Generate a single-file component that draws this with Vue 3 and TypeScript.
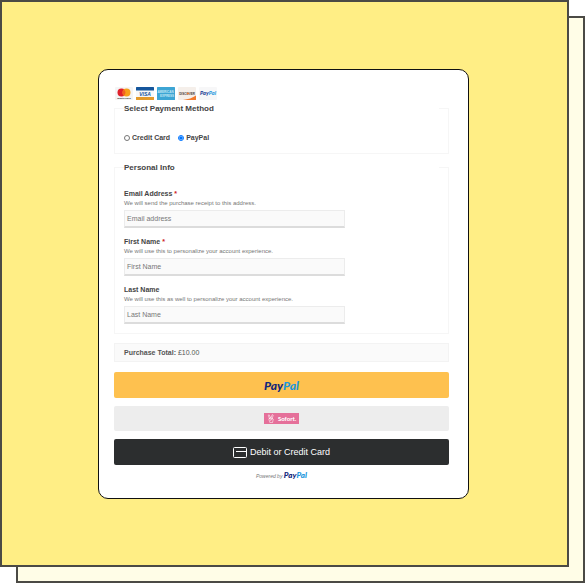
<script setup lang="ts">
import { ref } from 'vue'

interface Field {
  id: string
  label: string
  hint: string
  placeholder: string
  type: string
  required: boolean
}

const method = ref<'card' | 'paypal'>('paypal')

const fields: Field[] = [
  {
    id: 'email',
    label: 'Email Address',
    hint: 'We will send the purchase receipt to this address.',
    placeholder: 'Email address',
    type: 'email',
    required: true,
  },
  {
    id: 'first-name',
    label: 'First Name',
    hint: 'We will use this to personalize your account experience.',
    placeholder: 'First Name',
    type: 'text',
    required: true,
  },
  {
    id: 'last-name',
    label: 'Last Name',
    hint: 'We will use this as well to personalize your account experience.',
    placeholder: 'Last Name',
    type: 'text',
    required: false,
  },
]

const values = ref<Record<string, string>>({ email: '', 'first-name': '', 'last-name': '' })
</script>

<template>
  <div class="stage">
    <div class="backdrop"></div>
    <main class="panel">
      <form class="checkout" @submit.prevent>
        <div class="brands">
          <svg class="brand" viewBox="0 0 36 26">
            <rect width="36" height="26" rx="2" fill="#f4f4f5" />
            <circle cx="13" cy="11" r="8" fill="#e0202b" />
            <circle cx="23" cy="11" r="8" fill="#f79f1a" />
            <path d="M18 4.8a8 8 0 0 1 0 12.4a8 8 0 0 1 0-12.4z" fill="#f26122" />
            <text x="18" y="24" font-size="5" font-weight="700" text-anchor="middle" fill="#333">mastercard</text>
          </svg>
          <svg class="brand" viewBox="0 0 36 26">
            <rect width="36" height="26" rx="1" fill="#f7f8f9" />
            <path d="M0 1q0-1 1-1h34q1 0 1 1v6H0z" fill="#15569c" />
            <path d="M0 20h36v5q0 1-1 1H1q-1 0-1-1z" fill="#e39a2b" />
            <text x="18" y="17" font-size="10" font-weight="700" font-style="italic" text-anchor="middle" fill="#15569c">VISA</text>
          </svg>
          <svg class="brand" viewBox="0 0 36 26">
            <rect width="36" height="26" rx="1" fill="#3da5d4" />
            <text x="17" y="12" font-size="6" font-weight="700" text-anchor="middle" fill="#c4e7f5">AMERICAN</text>
            <text x="20" y="19" font-size="6" font-weight="700" text-anchor="middle" fill="#c4e7f5">EXPRESS</text>
          </svg>
          <svg class="brand" viewBox="0 0 36 26">
            <rect width="36" height="26" rx="2" fill="#f5efea" />
            <path d="M36 17v8q0 1-1 1H10Q26 24 36 17z" fill="#f27a2c" />
            <text x="18" y="15" font-size="6" font-weight="700" text-anchor="middle" fill="#4a3a35">DISCOVER</text>
            <circle cx="20" cy="13" r="2" fill="#f27a2c" />
          </svg>
          <svg class="brand" viewBox="0 0 36 26">
            <rect width="36" height="26" rx="2" fill="#f7f7f8" />
            <text class="brand-pay" x="18" y="16" font-size="11" text-anchor="middle" fill="#1c3f94">Pay<tspan fill="#2a9ade">Pal</tspan></text>
          </svg>
        </div>

        <fieldset class="group">
          <legend>Select Payment Method</legend>
          <div class="methods">
            <label class="method">
              <input v-model="method" type="radio" name="method" value="card" />
              Credit Card
            </label>
            <label class="method">
              <input v-model="method" type="radio" name="method" value="paypal" />
              PayPal
            </label>
          </div>
        </fieldset>

        <fieldset class="group">
          <legend>Personal Info</legend>
          <div class="fields">
            <div v-for="field in fields" :key="field.id" class="field">
              <label :for="field.id">
                {{ field.label }} <span v-if="field.required" class="required">*</span>
              </label>
              <span :id="field.id + '-hint'" class="hint">{{ field.hint }}</span>
              <input
                :id="field.id"
                v-model="values[field.id]"
                :type="field.type"
                :placeholder="field.placeholder"
                :required="field.required"
                :aria-describedby="field.id + '-hint'"
              />
            </div>
          </div>
        </fieldset>

        <p class="total"><strong>Purchase Total:</strong> £10.00</p>

        <div class="actions">
          <button type="button" class="pay gold">
            <span class="wordmark">Pay<span class="pal">Pal</span></span>
          </button>
          <button type="button" class="pay grey">
            <span class="sofort">
              <svg class="hand" viewBox="0 0 20 24" fill="none" stroke="#fff" stroke-width="1.500" stroke-linecap="round" stroke-linejoin="round">
                <path d="M6 12L3 4q0-2 2-2l4 8M10 10l3-8q2-1 3 1l-3 9" />
                <path d="M5 12q-2 3 1 7l1 4h7l1-5q3-4-1-6l-5-1z" />
                <path d="M6 12l4 2l4-1M8 17q3 1 4-2" />
              </svg>
              Sofort.
            </span>
          </button>
          <button type="button" class="pay dark">
            <svg class="card-icon" viewBox="0 0 14 11" fill="none" stroke="#fff">
              <rect x="0.500" y="0.500" width="13" height="10" rx="1" />
              <path d="M3 4.500h11" />
            </svg>
            Debit or Credit Card
          </button>
        </div>

        <p class="powered">Powered by <span class="wordmark small">Pay<span class="pal">Pal</span></span></p>
      </form>
    </main>
  </div>
</template>

<style>
body {
  margin: 0;
  background: #fff;
}
</style>

<style scoped>
.stage {
  box-sizing: border-box;
  min-height: 100vh;
  display: grid;
  grid-template-columns: 16px 1fr 16px;
  grid-template-rows: 16px 1fr 16px;
  font-family: "Liberation Sans", Arial, sans-serif;
  color: #444;
}

.backdrop,
.panel {
  box-sizing: border-box;
  border: 2px solid #4b4a45;
}

.backdrop {
  grid-area: 2 / 2 / 4 / 4;
  background: #fffde7;
}

.panel {
  grid-area: 1 / 1 / 3 / 3;
  padding: 67px 98px 66px 96px;
  background: #ffee85;
}

.checkout {
  box-sizing: border-box;
  padding: 17px 19px 17px 15px;
  border: 1px solid #111;
  border-radius: 10px;
  background: #fff;
}

.brands {
  display: flex;
  gap: 3px;
  padding-left: 1px;
}

.brand {
  display: block;
  width: 18px;
  height: 13px;
}

.brand-pay,
.wordmark {
  font-family: Lato, "Open Sans", sans-serif;
  font-style: italic;
  font-weight: 900;
}

.group {
  min-width: 0;
  margin: 2px 0 0;
  padding: 0 9px 9px;
  border: 1px solid #f6f6f6;
}

.group + .group {
  margin-top: 7px;
}

legend {
  box-sizing: border-box;
  width: 100%;
  padding: 0;
  background: #fff;
  font-size: 8px;
  font-weight: 700;
  line-height: 13px;
}

.methods {
  display: flex;
  gap: 8px;
  padding-top: 16px;
}

.method {
  display: flex;
  align-items: center;
  gap: 2px;
  font-size: 7px;
  font-weight: 700;
  line-height: 13px;
}

.method input {
  width: 6px;
  height: 6px;
  margin: 0;
}

.fields {
  display: grid;
  gap: 9px;
  padding-top: 15px;
}

.field {
  display: flex;
  flex-direction: column;
}

.field label {
  font-size: 7px;
  font-weight: 700;
  line-height: 10px;
}

.required {
  color: #c22;
}

.hint {
  margin-bottom: 2px;
  color: #777;
  font-size: 6px;
  line-height: 9px;
}

.field input {
  box-sizing: border-box;
  width: 70%;
  height: 18px;
  padding: 0 2px;
  border: 1px solid #ececec;
  border-bottom: 2px solid #dcdcdc;
  border-radius: 0;
  background: #fafafa;
  color: #444;
  font: 7px "Liberation Sans", Arial, sans-serif;
}

.field input::placeholder {
  color: #777;
}

.total {
  margin: 9px 0 10px;
  padding: 0 9px;
  border: 1px solid #f3f3f3;
  background: #fafafa;
  color: #555;
  font-size: 7px;
  line-height: 17px;
}

.actions {
  display: grid;
  gap: 8px;
}

.pay {
  display: flex;
  align-items: center;
  justify-content: center;
  gap: 3px;
  width: 100%;
  height: 26px;
  padding: 0;
  border: 0;
  border-radius: 2px;
  font-family: "Liberation Sans", Arial, sans-serif;
  font-size: 9px;
}

.gold {
  background: #fec14f;
}

.grey {
  height: 25px;
  background: #ededed;
}

.dark {
  background: #2c2e2f;
  color: #fff;
}

.wordmark {
  color: #12277c;
  font-size: 12px;
  line-height: 13px;
}

.wordmark.small {
  font-size: 8px;
  line-height: 10px;
}

.pal {
  color: #1c97dc;
}

.sofort {
  display: flex;
  align-items: center;
  justify-content: center;
  gap: 3px;
  width: 35px;
  height: 11px;
  background: #e5709a;
  color: #fff;
  font-family: Lato, sans-serif;
  font-size: 6px;
  font-weight: 900;
}

.hand {
  width: 8px;
  height: 9px;
}

.card-icon {
  width: 14px;
  height: 11px;
}

.powered {
  margin: 5px 0 0;
  color: #777;
  font-size: 5px;
  font-style: italic;
  line-height: 10px;
  text-align: center;
}
</style>
